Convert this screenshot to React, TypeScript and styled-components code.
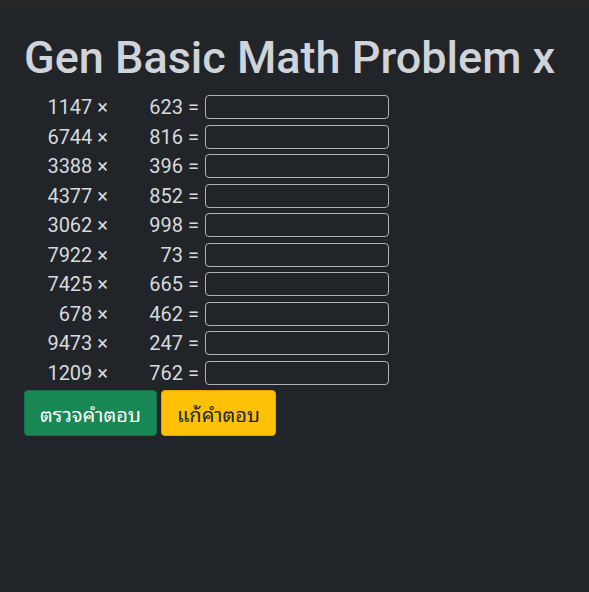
import React from "react";
import styled, { createGlobalStyle } from "styled-components";

const GlobalStyle = createGlobalStyle`
  html, body { margin: 0; padding: 0; background: #212529; }
  body { font-family: Roboto, "Noto Sans", sans-serif; color: #dee2e6; }
`;

const TopBar = styled.div`
  height: 7px;
  background: #272727;
`;

const Page = styled.main`
  min-height: 585px;
  padding: 0 24px;
  background: #212529;
`;

const Title = styled.h1`
  margin: 0;
  padding-top: 24px;
  font-family: Roboto, sans-serif;
  font-weight: 500;
  font-size: 45px;
  line-height: 54px;
  color: #d0d4d9;
  white-space: nowrap;
`;

const Problems = styled.div`
  display: flex;
  flex-direction: column;
  gap: 5.5px;
  margin-top: 10px;
`;

const Row = styled.div`
  display: grid;
  grid-template-columns: 84px 85px 184px;
  column-gap: 6px;
  align-items: center;
  height: 24px;
`;

const Term = styled.span`
  text-align: right;
  font-size: 20px;
  line-height: 24px;
  color: #d6d9dd;
  white-space: pre;
`;

const Answer = styled.input`
  box-sizing: border-box;
  width: 184px;
  height: 24px;
  margin: 0;
  border: 1.5px solid #aeb1b5;
  border-radius: 4px;
  background: #212529;
  color: #dee2e6;
  font-size: 16px;
  padding: 0 6px;
  outline: none;
`;

const Actions = styled.div`
  display: flex;
  gap: 4px;
  margin-top: 5.5px;
`;

const Button = styled.button<{ $variant: "success" | "warning" }>`
  height: 46px;
  padding: 0 15px;
  border-radius: 4px;
  font-family: "Noto Sans Thai Looped", "Loma", "Garuda", "Tlwg Typo", "Noto Sans Thai", "Noto Sans", Roboto, sans-serif;
  font-size: 20px;
  font-weight: 400;
  cursor: pointer;
  background: ${(p) => (p.$variant === "success" ? "#198754" : "#ffc107")};
  border: 1px solid ${(p) => (p.$variant === "success" ? "#157347" : "#e0a800")};
  color: ${(p) => (p.$variant === "success" ? "#ffffff" : "#212529")};
`;

const problems: [number, number][] = [
  [1147, 623],
  [6744, 816],
  [3388, 396],
  [4377, 852],
  [3062, 998],
  [7922, 73],
  [7425, 665],
  [678, 462],
  [9473, 247],
  [1209, 762],
];

export default function App() {
  return (
    <>
      <GlobalStyle />
      <TopBar />
      <Page>
        <Title>Gen Basic Math Problem x</Title>
        <Problems>
          {problems.map(([a, b], i) => (
            <Row key={i}>
              <Term>{a} ×</Term>
              <Term>{b} =</Term>
              <Answer type="text" />
            </Row>
          ))}
        </Problems>
        <Actions>
          <Button $variant="success">ตรวจคำตอบ</Button>
          <Button $variant="warning">แก้คำตอบ</Button>
        </Actions>
      </Page>
    </>
  );
}
